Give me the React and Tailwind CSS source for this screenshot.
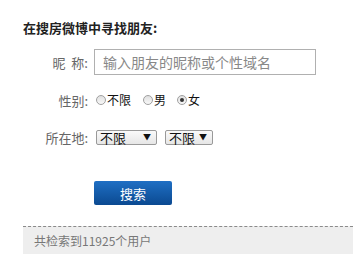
export default function App() {
  const font = { fontFamily: '"Noto Sans CJK SC", "Noto Sans", sans-serif' };
  return (
    <div className="w-[353px] h-[254px] bg-white overflow-hidden relative" style={font}>
      <div className="pl-[23px] pt-[19px]">
        <h1 className="text-[13px] leading-[18px] font-bold text-[#222]">在搜房微博中寻找朋友:</h1>
        <div className="mt-[12px] flex items-center h-[26px]">
          <div className="w-[65px] text-right text-[13px] text-[#666] leading-none">昵&nbsp;&nbsp;称:</div>
          <div className="ml-[6px] w-[222px] h-[26px] border border-[#b0b0b0] flex items-center pl-[8px] text-[14px] text-[#888]">
            输入朋友的昵称或个性域名
          </div>
        </div>
        <div className="mt-[13px] flex items-center h-[24px]">
          <div className="w-[65px] text-right text-[13px] text-[#666] leading-none">性别:</div>
          <div className="ml-[8px] flex items-center text-[12px] text-[#111] leading-none">
            <span className="w-[10px] h-[10px] rounded-full border border-[#a0a0a0] bg-gradient-to-b from-[#e0e0e0] to-[#f8f8f8]"></span>
            <span className="ml-[1px]">不限</span>
            <span className="ml-[12px] w-[10px] h-[10px] rounded-full border border-[#a0a0a0] bg-gradient-to-b from-[#e0e0e0] to-[#f8f8f8]"></span>
            <span className="ml-[1px]">男</span>
            <span className="ml-[11px] w-[10px] h-[10px] rounded-full border border-[#a0a0a0] bg-gradient-to-b from-[#e0e0e0] to-[#f8f8f8] flex items-center justify-center">
              <span className="w-[4px] h-[4px] rounded-full bg-[#333]"></span>
            </span>
            <span className="ml-[1px]">女</span>
          </div>
        </div>
        <div className="mt-[17px] flex items-center h-[16px]">
          <div className="w-[65px] text-right text-[13px] text-[#666] leading-none">所在地:</div>
          <div className="ml-[8px] flex items-center">
            <div className="w-[61px] h-[15px] border border-[#999] rounded-[2px] bg-gradient-to-b from-[#fafafa] to-[#e6e6e6] flex items-center justify-between pl-[3px] pr-[5px] text-[13px] leading-none text-[#111]">
              <span>不限</span>
              <span className="text-[8px]">▼</span>
            </div>
            <div className="ml-[8px] w-[48px] h-[15px] border border-[#999] rounded-[2px] bg-gradient-to-b from-[#fafafa] to-[#e6e6e6] flex items-center justify-between pl-[3px] pr-[5px] text-[13px] leading-none text-[#111]">
              <span>不限</span>
              <span className="text-[8px]">▼</span>
            </div>
          </div>
        </div>
        <div className="mt-[36px] ml-[71px] w-[78px] h-[24px] rounded-[2px] bg-gradient-to-b from-[#1f6fc4] to-[#0b4a91] flex items-center justify-center text-white text-[13px] leading-none">
          搜索
        </div>
        <div className="mt-[21px] border-t border-dashed border-[#8a8a8a] bg-[#eeeeee] h-[28px] flex items-center pl-[11px] text-[12px] text-[#777] leading-none">
          共检索到11925个用户
        </div>
      </div>
    </div>
  );
}
